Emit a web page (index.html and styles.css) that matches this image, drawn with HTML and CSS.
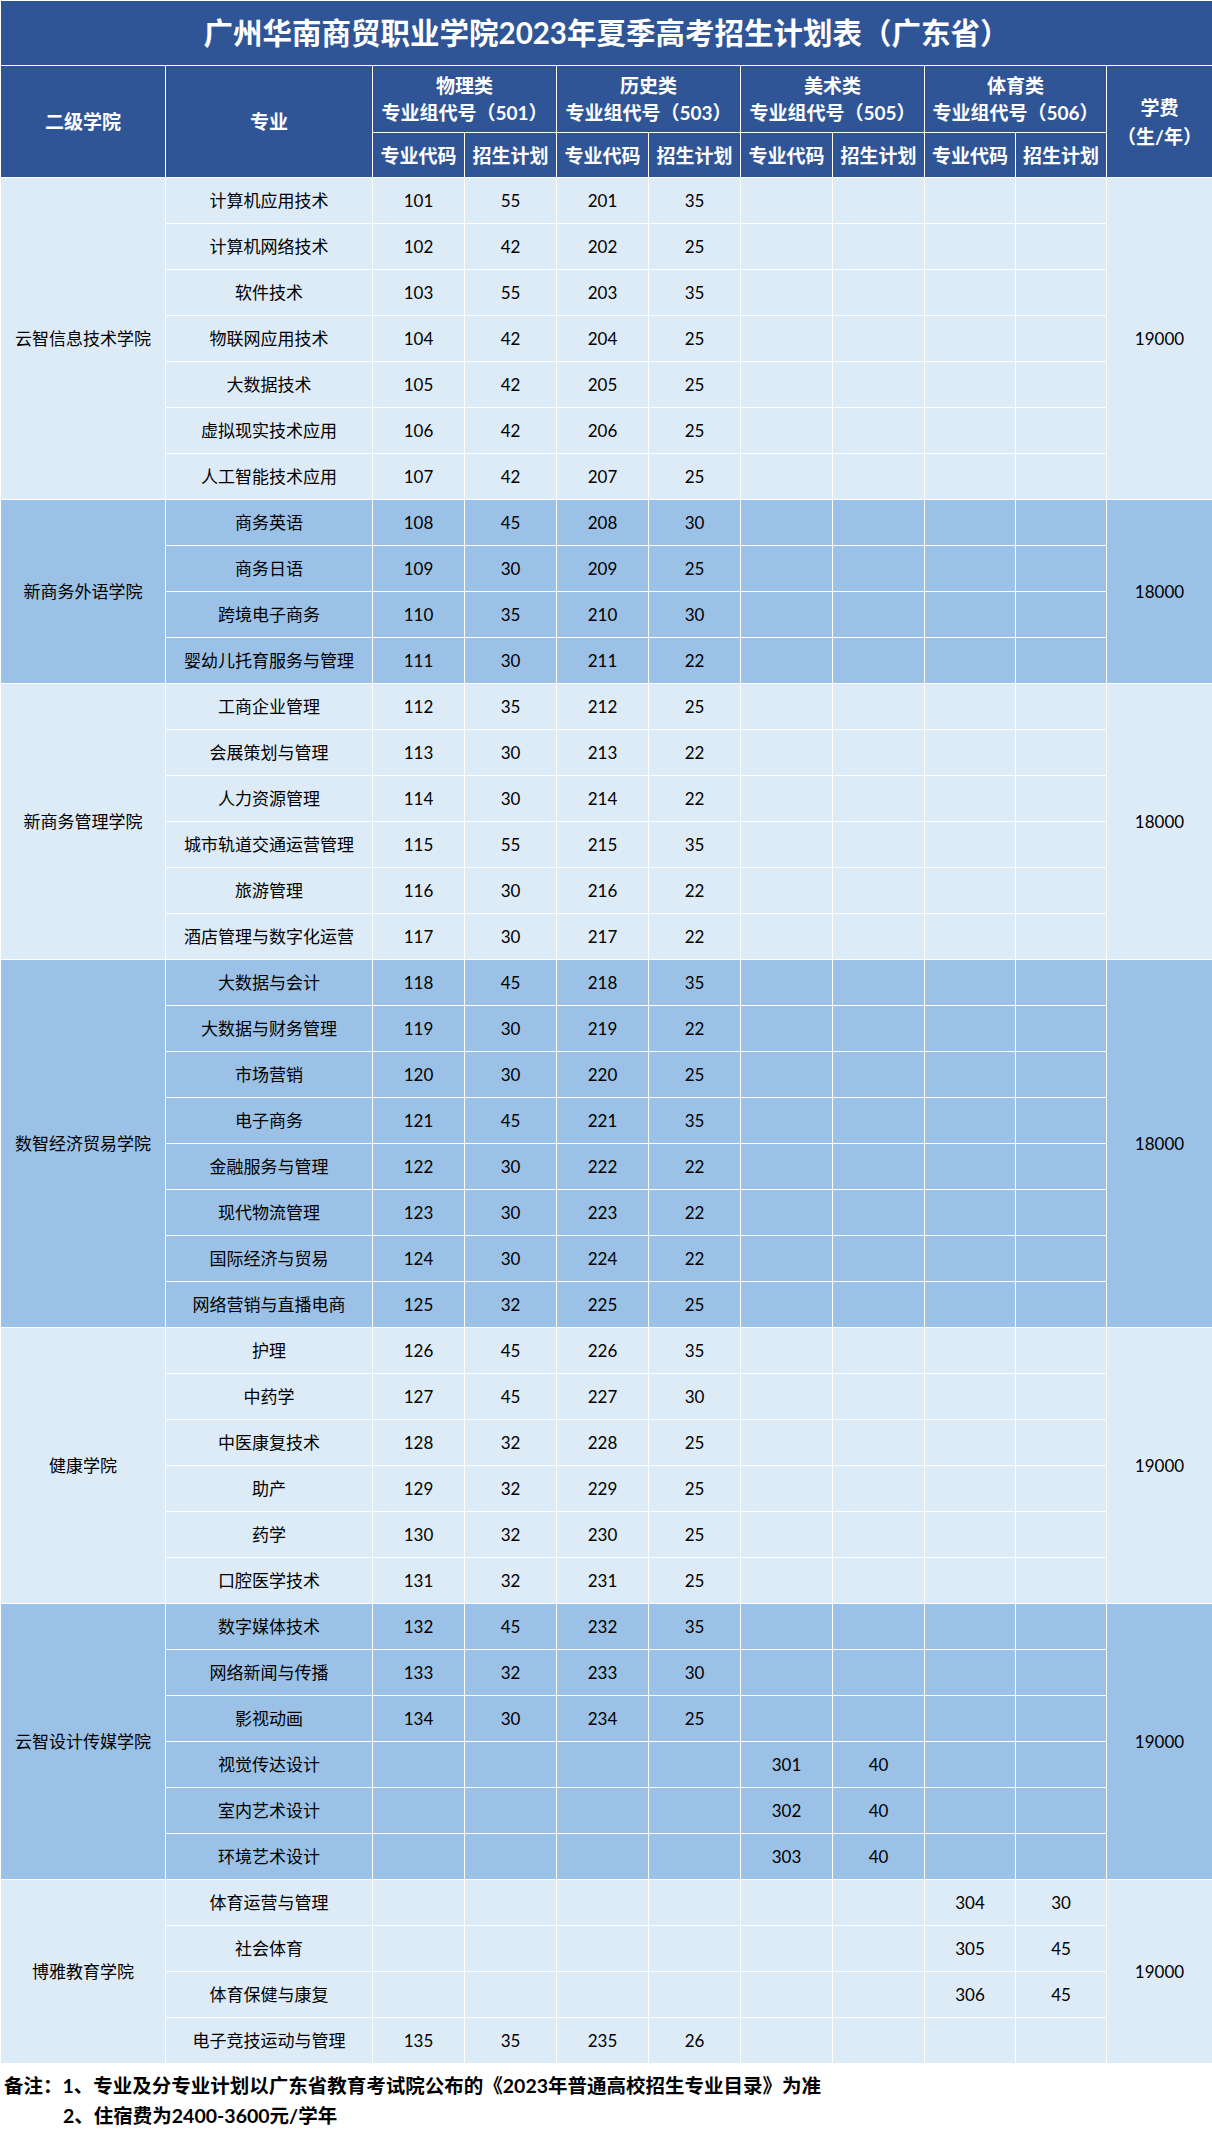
FILE: index.html
```html
<!DOCTYPE html>
<html lang="zh-CN">
<head>
<meta charset="utf-8">
<title>广州华南商贸职业学院2023年夏季高考招生计划表（广东省）</title>
<link rel="stylesheet" href="styles.css">
</head>
<body>
<table class="plan">
<colgroup>
<col class="c-college"><col class="c-major">
<col class="c-n"><col class="c-n"><col class="c-n"><col class="c-n">
<col class="c-n"><col class="c-n"><col class="c-n2"><col class="c-n2">
<col class="c-fee">
</colgroup>
<thead>
<tr class="r-title"><th colspan="11" class="title">广州华南商贸职业学院2023年夏季高考招生计划表（广东省）</th></tr>
<tr class="r-h1">
<th rowspan="2">二级学院</th>
<th rowspan="2">专业</th>
<th colspan="2">物理类<br>专业组代号（501）</th>
<th colspan="2">历史类<br>专业组代号（503）</th>
<th colspan="2">美术类<br>专业组代号（505）</th>
<th colspan="2">体育类<br>专业组代号（506）</th>
<th rowspan="2" class="fee-h">学费<br>（生/年）</th>
</tr>
<tr class="r-h2">
<th>专业代码</th><th>招生计划</th>
<th>专业代码</th><th>招生计划</th>
<th>专业代码</th><th>招生计划</th>
<th>专业代码</th><th>招生计划</th>
</tr>
</thead>
<tbody>
<tr class="lt"><td rowspan="7" class="tx">云智信息技术学院</td><td class="tx">计算机应用技术</td><td>101</td><td>55</td><td>201</td><td>35</td><td></td><td></td><td></td><td></td><td rowspan="7">19000</td></tr>
<tr class="lt"><td class="tx">计算机网络技术</td><td>102</td><td>42</td><td>202</td><td>25</td><td></td><td></td><td></td><td></td></tr>
<tr class="lt"><td class="tx">软件技术</td><td>103</td><td>55</td><td>203</td><td>35</td><td></td><td></td><td></td><td></td></tr>
<tr class="lt"><td class="tx">物联网应用技术</td><td>104</td><td>42</td><td>204</td><td>25</td><td></td><td></td><td></td><td></td></tr>
<tr class="lt"><td class="tx">大数据技术</td><td>105</td><td>42</td><td>205</td><td>25</td><td></td><td></td><td></td><td></td></tr>
<tr class="lt"><td class="tx">虚拟现实技术应用</td><td>106</td><td>42</td><td>206</td><td>25</td><td></td><td></td><td></td><td></td></tr>
<tr class="lt"><td class="tx">人工智能技术应用</td><td>107</td><td>42</td><td>207</td><td>25</td><td></td><td></td><td></td><td></td></tr>

<tr class="md"><td rowspan="4" class="tx">新商务外语学院</td><td class="tx">商务英语</td><td>108</td><td>45</td><td>208</td><td>30</td><td></td><td></td><td></td><td></td><td rowspan="4">18000</td></tr>
<tr class="md"><td class="tx">商务日语</td><td>109</td><td>30</td><td>209</td><td>25</td><td></td><td></td><td></td><td></td></tr>
<tr class="md"><td class="tx">跨境电子商务</td><td>110</td><td>35</td><td>210</td><td>30</td><td></td><td></td><td></td><td></td></tr>
<tr class="md"><td class="tx">婴幼儿托育服务与管理</td><td>111</td><td>30</td><td>211</td><td>22</td><td></td><td></td><td></td><td></td></tr>

<tr class="lt"><td rowspan="6" class="tx">新商务管理学院</td><td class="tx">工商企业管理</td><td>112</td><td>35</td><td>212</td><td>25</td><td></td><td></td><td></td><td></td><td rowspan="6">18000</td></tr>
<tr class="lt"><td class="tx">会展策划与管理</td><td>113</td><td>30</td><td>213</td><td>22</td><td></td><td></td><td></td><td></td></tr>
<tr class="lt"><td class="tx">人力资源管理</td><td>114</td><td>30</td><td>214</td><td>22</td><td></td><td></td><td></td><td></td></tr>
<tr class="lt"><td class="tx">城市轨道交通运营管理</td><td>115</td><td>55</td><td>215</td><td>35</td><td></td><td></td><td></td><td></td></tr>
<tr class="lt"><td class="tx">旅游管理</td><td>116</td><td>30</td><td>216</td><td>22</td><td></td><td></td><td></td><td></td></tr>
<tr class="lt"><td class="tx">酒店管理与数字化运营</td><td>117</td><td>30</td><td>217</td><td>22</td><td></td><td></td><td></td><td></td></tr>

<tr class="md"><td rowspan="8" class="tx">数智经济贸易学院</td><td class="tx">大数据与会计</td><td>118</td><td>45</td><td>218</td><td>35</td><td></td><td></td><td></td><td></td><td rowspan="8">18000</td></tr>
<tr class="md"><td class="tx">大数据与财务管理</td><td>119</td><td>30</td><td>219</td><td>22</td><td></td><td></td><td></td><td></td></tr>
<tr class="md"><td class="tx">市场营销</td><td>120</td><td>30</td><td>220</td><td>25</td><td></td><td></td><td></td><td></td></tr>
<tr class="md"><td class="tx">电子商务</td><td>121</td><td>45</td><td>221</td><td>35</td><td></td><td></td><td></td><td></td></tr>
<tr class="md"><td class="tx">金融服务与管理</td><td>122</td><td>30</td><td>222</td><td>22</td><td></td><td></td><td></td><td></td></tr>
<tr class="md"><td class="tx">现代物流管理</td><td>123</td><td>30</td><td>223</td><td>22</td><td></td><td></td><td></td><td></td></tr>
<tr class="md"><td class="tx">国际经济与贸易</td><td>124</td><td>30</td><td>224</td><td>22</td><td></td><td></td><td></td><td></td></tr>
<tr class="md"><td class="tx">网络营销与直播电商</td><td>125</td><td>32</td><td>225</td><td>25</td><td></td><td></td><td></td><td></td></tr>

<tr class="lt"><td rowspan="6" class="tx">健康学院</td><td class="tx">护理</td><td>126</td><td>45</td><td>226</td><td>35</td><td></td><td></td><td></td><td></td><td rowspan="6">19000</td></tr>
<tr class="lt"><td class="tx">中药学</td><td>127</td><td>45</td><td>227</td><td>30</td><td></td><td></td><td></td><td></td></tr>
<tr class="lt"><td class="tx">中医康复技术</td><td>128</td><td>32</td><td>228</td><td>25</td><td></td><td></td><td></td><td></td></tr>
<tr class="lt"><td class="tx">助产</td><td>129</td><td>32</td><td>229</td><td>25</td><td></td><td></td><td></td><td></td></tr>
<tr class="lt"><td class="tx">药学</td><td>130</td><td>32</td><td>230</td><td>25</td><td></td><td></td><td></td><td></td></tr>
<tr class="lt"><td class="tx">口腔医学技术</td><td>131</td><td>32</td><td>231</td><td>25</td><td></td><td></td><td></td><td></td></tr>

<tr class="md"><td rowspan="6" class="tx">云智设计传媒学院</td><td class="tx">数字媒体技术</td><td>132</td><td>45</td><td>232</td><td>35</td><td></td><td></td><td></td><td></td><td rowspan="6">19000</td></tr>
<tr class="md"><td class="tx">网络新闻与传播</td><td>133</td><td>32</td><td>233</td><td>30</td><td></td><td></td><td></td><td></td></tr>
<tr class="md"><td class="tx">影视动画</td><td>134</td><td>30</td><td>234</td><td>25</td><td></td><td></td><td></td><td></td></tr>
<tr class="md"><td class="tx">视觉传达设计</td><td></td><td></td><td></td><td></td><td>301</td><td>40</td><td></td><td></td></tr>
<tr class="md"><td class="tx">室内艺术设计</td><td></td><td></td><td></td><td></td><td>302</td><td>40</td><td></td><td></td></tr>
<tr class="md"><td class="tx">环境艺术设计</td><td></td><td></td><td></td><td></td><td>303</td><td>40</td><td></td><td></td></tr>

<tr class="lt"><td rowspan="4" class="tx">博雅教育学院</td><td class="tx">体育运营与管理</td><td></td><td></td><td></td><td></td><td></td><td></td><td>304</td><td>30</td><td rowspan="4">19000</td></tr>
<tr class="lt"><td class="tx">社会体育</td><td></td><td></td><td></td><td></td><td></td><td></td><td>305</td><td>45</td></tr>
<tr class="lt"><td class="tx">体育保健与康复</td><td></td><td></td><td></td><td></td><td></td><td></td><td>306</td><td>45</td></tr>
<tr class="lt"><td class="tx">电子竞技运动与管理</td><td>135</td><td>35</td><td>235</td><td>26</td><td></td><td></td><td></td><td></td></tr>
</tbody>
</table>
<div class="notes">
<p class="note">备注：1、专业及分专业计划以广东省教育考试院公布的《2023年普通高校招生专业目录》为准</p>
<p class="note indent">2、住宿费为2400-3600元/学年</p>
</div>
</body>
</html>
```
FILE: styles.css
```css
html, body {
  margin: 0;
  padding: 0;
  background: #ffffff;
}

body {
  width: 1212px;
  font-family: "Lato", "Noto Sans CJK SC", sans-serif;
  color: #000000;
}

.plan {
  width: 1212px;
  border-collapse: collapse;
  table-layout: fixed;
}

.c-college { width: 165px; }
.c-major { width: 207px; }
.c-n { width: 92px; }
.c-n2 { width: 91px; }
.c-fee { width: 106px; }

.plan th,
.plan td {
  border: 1px solid #ffffff;
  padding: 0;
  text-align: center;
  vertical-align: middle;
}

.plan th {
  background: #2f5597;
  color: #ffffff;
  font-weight: 700;
  font-size: 19px;
  line-height: 27px;
  white-space: nowrap;
}

.plan th.title {
  font-size: 29.5px;
  line-height: 40px;
}

.plan th.fee-h {
  line-height: 29px;
}

.r-title { height: 65px; }
.r-h1 { height: 67px; }
.r-h2 { height: 45px; }

.plan tbody tr { height: 46px; }

.plan td {
  font-size: 17px;
  line-height: 22px;
  white-space: nowrap;
}

.plan td.tx {
  font-size: 17px;
}

.lt td { background: #ddebf7; }
.md td { background: #9bc2e6; }

.notes {
  padding-top: 7px;
}

.note {
  margin: 0;
  font-size: 19.5px;
  font-weight: 700;
  line-height: 30px;
  padding-left: 4px;
  white-space: nowrap;
}

.note.indent {
  padding-left: 63px;
}
```
